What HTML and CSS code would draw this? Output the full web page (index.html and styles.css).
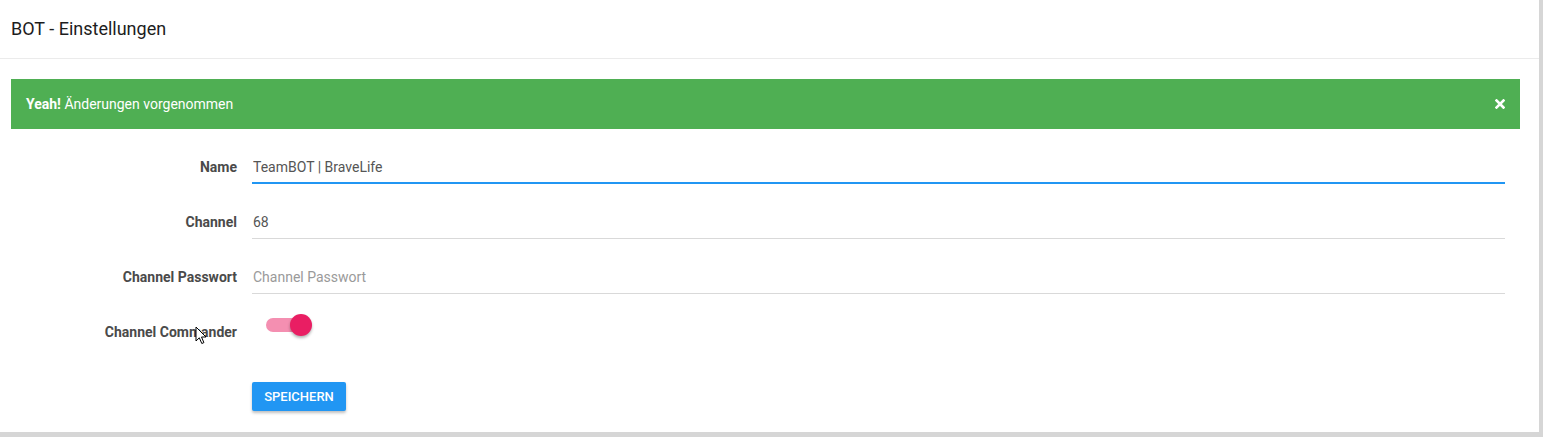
FILE: index.html
```html
<!DOCTYPE html>
<html lang="de">
<head>
<meta charset="utf-8">
<title>BOT - Einstellungen</title>
<link rel="stylesheet" href="styles.css">
</head>
<body>
<div class="card">
  <div class="card-header">BOT - Einstellungen</div>
  <div class="card-body">
    <div class="alert">
      <span><strong>Yeah!</strong> Änderungen vorgenommen</span>
      <svg class="close" width="10" height="10" viewBox="0 0 10 10"><path d="M1.5 1.5 L8.5 8.5 M8.5 1.5 L1.5 8.5" stroke="#fff" stroke-width="2.6" stroke-linecap="square"/></svg>
    </div>
    <form class="form">
      <label class="label">Name</label>
      <div class="field"><input class="input active" type="text" value="TeamBOT | BraveLife"></div>
      <label class="label">Channel</label>
      <div class="field"><input class="input" type="text" value="68"></div>
      <label class="label">Channel Passwort</label>
      <div class="field"><input class="input" type="text" placeholder="Channel Passwort"></div>
      <label class="label label-toggle">Channel Commander</label>
      <div class="field field-toggle"><span class="toggle"><span class="track"></span><span class="thumb"></span></span></div>
      <div></div>
      <div class="field field-btn"><button type="button" class="btn">Speichern</button></div>
    </form>
  </div>
  <svg class="cursor" width="13" height="20" viewBox="0 0 13 20"><path d="M1 1 L1 15 L4.3 11.8 L6.8 17.5 L8.9 16.6 L6.5 11 L11 11 Z" fill="#fff" stroke="#000" stroke-width="1" stroke-linejoin="round"/></svg>
</div>
</body>
</html>
```
FILE: styles.css
```css
html, body {
  margin: 0;
  padding: 0;
}
body {
  background: #d6d6d6;
  font-family: Roboto, "Liberation Sans", Arial, sans-serif;
  width: 1543px;
  height: 437px;
  overflow: hidden;
}
.card {
  position: relative;
  width: 1539px;
  height: 432px;
  background: #fff;
}
.card-header {
  height: 59px;
  box-sizing: border-box;
  padding: 0 11px 2px;
  display: flex;
  align-items: center;
  font-size: 18px;
  color: #1d1d1d;
  border-bottom: 1px solid #ebebeb;
}
.card-body {
  padding: 20px 19px 0 11px;
}
.alert {
  height: 50px;
  background: #4faf53;
  color: #fff;
  font-size: 14px;
  display: flex;
  align-items: center;
  justify-content: space-between;
  padding: 0 15px;
}
.alert strong {
  font-weight: 700;
}
.form {
  display: grid;
  grid-template-columns: 226px 1fr;
  column-gap: 15px;
  row-gap: 21px;
  margin-top: 21px;
  padding-right: 15px;
}
.label {
  text-align: right;
  font-size: 14px;
  font-weight: 700;
  color: #4a4a4a;
  line-height: 34px;
}
.field {
  display: flex;
}
.input {
  flex: 1;
  height: 34px;
  box-sizing: border-box;
  border: none;
  border-bottom: 1px solid #d9d9d9;
  padding: 0 1px;
  font-family: Roboto, "Liberation Sans", Arial, sans-serif;
  font-size: 14px;
  color: #555;
  background: transparent;
  outline: none;
}
.input.active {
  border-bottom: 2px solid #2196f3;
  padding-top: 1px;
}
.input::placeholder {
  color: #9a9a9a;
}
.field-toggle {
  height: 34px;
  align-items: flex-start;
  padding-left: 14px;
}
.toggle {
  position: relative;
  width: 46px;
  height: 22px;
  margin-top: -1px;
}
.track {
  position: absolute;
  left: 0;
  top: 4px;
  width: 38px;
  height: 14px;
  border-radius: 7px;
  background: #f48fb1;
}
.thumb {
  position: absolute;
  right: 0;
  top: 0;
  width: 22px;
  height: 22px;
  border-radius: 50%;
  background: #e91e63;
  box-shadow: 0 2px 3px rgba(0,0,0,0.3);
}
.field-btn {
  margin-top: 12px;
}
.btn {
  height: 29px;
  width: 94px;
  border: none;
  border-radius: 2px;
  background: #2196f3;
  color: #fff;
  font-family: Roboto, "Liberation Sans", Arial, sans-serif;
  font-size: 13px;
  font-weight: 500;
  text-transform: uppercase;
  box-shadow: 0 2px 3px rgba(0,0,0,0.25);
  padding: 0;
}
.cursor {
  position: absolute;
  left: 195px;
  top: 326px;
}
```
